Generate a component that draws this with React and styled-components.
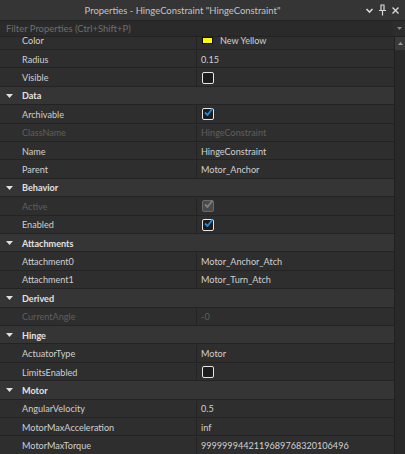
import React from "react";
import styled, { createGlobalStyle } from "styled-components";

const Global = createGlobalStyle`
  html, body { margin: 0; padding: 0; background: #2e2e2e; }
  body { font-family: Lato, "Noto Sans", sans-serif; }
  * { box-sizing: border-box; }
`;

const Panel = styled.div`
  width: 405px;
  height: 454px;
  display: flex;
  flex-direction: column;
  background: #2e2e2e;
  overflow: hidden;
`;

const TitleBar = styled.div`
  height: 20px;
  flex: none;
  display: flex;
  align-items: center;
  background: #353535;
  color: #c4c4c4;
  font-size: 9.45px;
`;

const Title = styled.div`
  flex: 1;
  text-align: center;
  padding-left: 0;
`;

const TitleIcons = styled.div`
  display: flex;
  align-items: center;
  gap: 4px;
  padding-right: 5px;
`;

const FilterBar = styled.div`
  height: 17px;
  flex: none;
  display: flex;
  background: #2a2a2a;
  border-top: 1px solid #222;
  border-bottom: 1px solid #222;
`;

const FilterInput = styled.div`
  flex: 1;
  color: #6e6e6e;
  font-size: 9.45px;
  line-height: 15px;
  padding-left: 6px;
`;

const FilterDrop = styled.div`
  width: 12px;
  display: flex;
  align-items: center;
  justify-content: center;
  background: #2d2d2d;
`;

const Body = styled.div`
  flex: 1;
  display: flex;
  min-height: 0;
`;

const ListClip = styled.div`
  flex: 1;
  overflow: hidden;
  border-right: 1px solid #202020;
`;

const List = styled.div`
  margin-top: -5.5px;
`;

const RowBase = styled.div`
  height: 18.42px;
  display: flex;
  align-items: center;
  border-bottom: 1px solid #232323;
  font-size: 9.1px;
  padding-top: 1px;
`;

const HeaderRow = styled(RowBase)`
  background: #353535;
  color: #e2e2e2;
  font-weight: 700;
`;

const Tri = styled.div`
  width: 22px;
  display: flex;
  justify-content: center;
  padding-right: 3px;
`;

const PropRow = styled(RowBase)`
  background: #2e2e2e;
  color: ${(p) => (p.$disabled ? "#5f5f5f" : "#d0d0d0")};
`;

const NameCell = styled.div`
  width: 197px;
  height: 100%;
  display: flex;
  align-items: center;
  padding-left: 22px;
  border-right: 1px solid #232323;
  white-space: nowrap;
`;

const ValueCell = styled.div`
  flex: 1;
  display: flex;
  align-items: center;
  gap: 7px;
  padding-left: 4px;
  white-space: nowrap;
`;

const Check = styled.div`
  width: 12px;
  height: 12px;
  margin-left: 1px;
  border-radius: 2px;
  border: 1.5px solid ${(p) => (p.$disabled ? "#6a6a6a" : "#e6e6e6")};
  background: ${(p) => (p.$disabled ? "#4a4a4a" : "#1c1c1c")};
  position: relative;
`;

const Swatch = styled.div`
  width: 11px;
  height: 7px;
  margin-left: 1px;
  background: #ffff00;
  border: 1px solid #111;
`;

const ScrollBar = styled.div`
  width: 10px;
  flex: none;
  display: flex;
  flex-direction: column;
  background: #2b2b2b;
`;

const ScrollUp = styled.div`
  height: 13px;
  background: #3a3a3a;
  display: flex;
  align-items: center;
  justify-content: center;
`;

const Track = styled.div`
  flex: 1;
  background: #292929;
`;

const TriDown = ({ color = "#e0e0e0", w = 7, h = 4, up }) => (
  <svg width={w} height={h} viewBox="0 0 7 4">
    <path d={up ? "M0 4 L7 4 L3.5 0 Z" : "M0 0 L7 0 L3.5 4 Z"} fill={color} />
  </svg>
);

const CheckBox = ({ checked, disabled }) => (
  <Check $disabled={disabled}>
    {checked && (
      <svg width="9" height="8" viewBox="0 0 9 8" style={{ position: "absolute", left: 1, top: -1 }}>
        <path d="M1 4.5 L3.5 7 L8.5 0.5" fill="none" stroke={disabled ? "#808080" : "#1d8ce0"} strokeWidth="1.8" />
      </svg>
    )}
  </Check>
);

const data = [
  { t: "p", n: "Color", v: "New Yellow", swatch: true },
  { t: "p", n: "Radius", v: "0.15" },
  { t: "p", n: "Visible", cb: false },
  { t: "h", n: "Data" },
  { t: "p", n: "Archivable", cb: true },
  { t: "p", n: "ClassName", v: "HingeConstraint", dis: true },
  { t: "p", n: "Name", v: "HingeConstraint" },
  { t: "p", n: "Parent", v: "Motor_Anchor" },
  { t: "h", n: "Behavior" },
  { t: "p", n: "Active", cb: true, dis: true },
  { t: "p", n: "Enabled", cb: true },
  { t: "h", n: "Attachments" },
  { t: "p", n: "Attachment0", v: "Motor_Anchor_Atch" },
  { t: "p", n: "Attachment1", v: "Motor_Turn_Atch" },
  { t: "h", n: "Derived" },
  { t: "p", n: "CurrentAngle", v: "-0", dis: true },
  { t: "h", n: "Hinge" },
  { t: "p", n: "ActuatorType", v: "Motor" },
  { t: "p", n: "LimitsEnabled", cb: false },
  { t: "h", n: "Motor" },
  { t: "p", n: "AngularVelocity", v: "0.5" },
  { t: "p", n: "MotorMaxAcceleration", v: "inf" },
  { t: "p", n: "MotorMaxTorque", v: "9999999442119689768320106496" },
];

export default function App() {
  return (
    <Panel>
      <Global />
      <TitleBar>
        <Title>Properties - HingeConstraint "HingeConstraint"</Title>
        <TitleIcons>
          <svg width="9" height="9" viewBox="0 0 9 9">
            <path d="M1.5 3 L4.5 6 L7.5 3" fill="none" stroke="#d8d8d8" strokeWidth="1.6" />
          </svg>
          <svg width="9" height="12" viewBox="0 0 9 12">
            <path d="M2.5 1 H6.5 M3 1 V6 M6 1 V6 M1 6.5 H8 M4.5 6.5 V11.5" fill="none" stroke="#d8d8d8" strokeWidth="1.2" />
          </svg>
          <svg width="9" height="9" viewBox="0 0 9 9">
            <path d="M1.5 1.5 L7.5 7.5 M7.5 1.5 L1.5 7.5" fill="none" stroke="#d8d8d8" strokeWidth="1.4" />
          </svg>
        </TitleIcons>
      </TitleBar>
      <FilterBar>
        <FilterInput>Filter Properties (Ctrl+Shift+P)</FilterInput>
        <FilterDrop>
          <TriDown color="#8a8a8a" w={5} h={3} />
        </FilterDrop>
      </FilterBar>
      <Body>
        <ListClip>
          <List>
            {data.map((r, i) =>
              r.t === "h" ? (
                <HeaderRow key={i}>
                  <Tri>
                    <TriDown />
                  </Tri>
                  {r.n}
                </HeaderRow>
              ) : (
                <PropRow key={i} $disabled={r.dis}>
                  <NameCell>{r.n}</NameCell>
                  <ValueCell>
                    {r.swatch && <Swatch />}
                    {r.cb !== undefined ? <CheckBox checked={r.cb} disabled={r.dis} /> : r.v}
                  </ValueCell>
                </PropRow>
              )
            )}
          </List>
        </ListClip>
        <ScrollBar>
          <ScrollUp>
            <TriDown color="#9a9a9a" w={5} h={3} up />
          </ScrollUp>
          <Track />
        </ScrollBar>
      </Body>
    </Panel>
  );
}
